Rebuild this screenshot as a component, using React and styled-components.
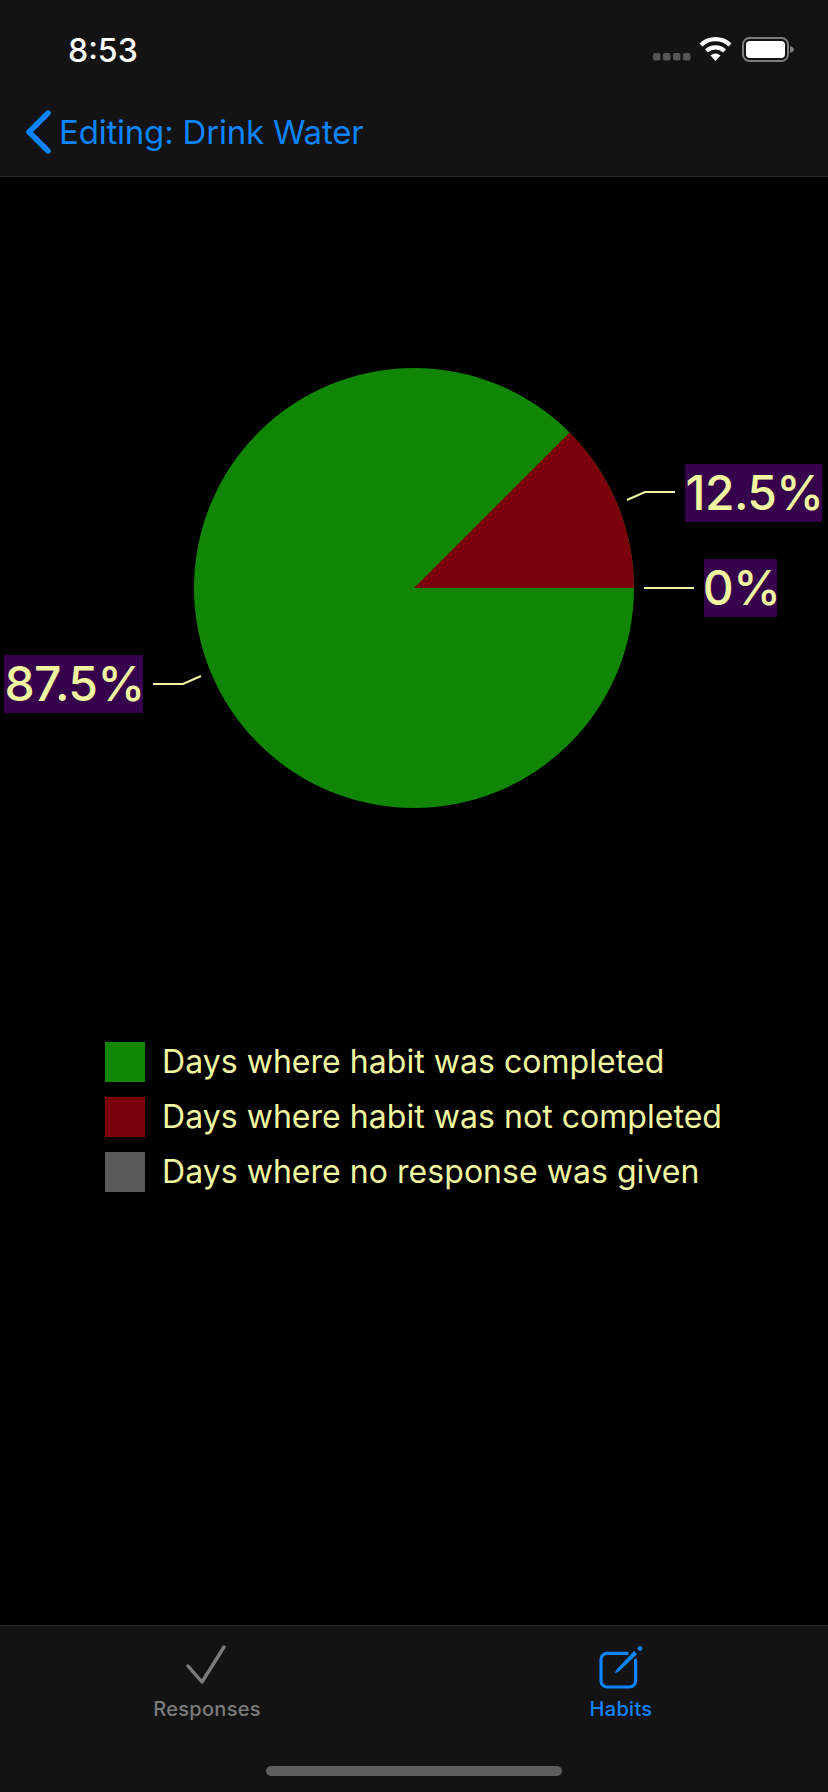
import React from "react";
import styled, { createGlobalStyle } from "styled-components";

const GlobalStyle = createGlobalStyle`
  html, body {
    margin: 0;
    padding: 0;
    background-color: #000;
  }
  body {
    font-family: Inter, "Noto Sans", sans-serif;
  }
`;

const Body = styled.div`
  display: flex;
  flex-direction: column;
  width: 828px;
  height: 1792px;
  overflow: hidden;
  background-color: #000;
`;
const Header = styled.header`
  height: 176px;
  flex-shrink: 0;
  background-color: #131313;
  border-bottom: 1px solid #2b2b2b;
`;
const StatusBar = styled.div`
  display: flex;
  align-items: center;
  justify-content: space-between;
  height: 88px;
  padding: 12px 33px 0 68px;
  box-sizing: border-box;
`;
const Time = styled.span`
  margin-top: 1px;
  color: #fff;
  font-size: 32px;
  font-weight: 500;
  line-height: 1;
`;
const NavBar = styled.div`
  display: flex;
  align-items: center;
  gap: 8px;
  height: 88px;
  padding-left: 25px;
`;
const NavTitle = styled.span`
  color: #0a84ff;
  font-size: 33px;
  font-weight: 400;
  letter-spacing: -0.2px;
`;
const Main = styled.main`
  flex: 1;
  display: flex;
  flex-direction: column;
`;
const Chart = styled.svg`
  display: block;
  width: 828px;
  height: 800px;
  flex-shrink: 0;
`;
const SliceLabel = styled.text`
  fill: #f0f7a0;
  font-family: Inter, "Noto Sans", sans-serif;
  font-size: 48px;
  font-weight: 500;
  letter-spacing: -0.6px;
`;
const Legend = styled.ul`
  display: flex;
  flex-direction: column;
  gap: 15px;
  margin: 65px 0 0;
  padding: 0 0 0 105px;
  list-style: none;
`;
const LegendRow = styled.li`
  display: flex;
  align-items: center;
  gap: 17px;
  height: 40px;
  color: #f0f7a0;
  font-size: 32px;
`;
const LegendText = styled.span`
  padding-bottom: 2px;
  letter-spacing: 0.04px;
`;
const Swatch = styled.span`
  width: 40px;
  height: 40px;
  background-color: ${(p) => p.$color};
`;
const TabBar = styled.footer`
  display: flex;
  flex-direction: column;
  align-items: center;
  height: 166px;
  flex-shrink: 0;
  background-color: #131313;
  border-top: 1px solid #2b2b2b;
`;
const Tabs = styled.nav`
  display: flex;
  width: 100%;
  padding-top: 18px;
`;
const Tab = styled.div`
  flex: 1;
  display: flex;
  flex-direction: column;
  align-items: center;
  gap: 5px;
  color: ${(p) => (p.$active ? "#0a84ff" : "#7b7b7b")};
  font-size: 20px;
  font-weight: 500;
  letter-spacing: 0.3px;
`;
const TabIcon = styled.svg`
  display: block;
  width: 48px;
  height: 48px;
`;
const HomeIndicator = styled.div`
  width: 296px;
  height: 10px;
  margin-top: 45px;
  border-radius: 5px;
  background-color: #5e5e5e;
`;
const StatusIcons = styled.svg`
  display: block;
  width: 142px;
  height: 30px;
`;

const LEGEND = [
  { color: "#118504", text: "Days where habit was completed" },
  { color: "#7a000c", text: "Days where habit was not completed" },
  { color: "#595959", text: "Days where no response was given" },
];

const LABELS = [
  { text: "12.5%", x: 685, y: 464, w: 137, line: "627,500 645,492 675,492" },
  { text: "0%", x: 704, y: 559, w: 73, line: "644,588 694,588" },
  { text: "87.5%", x: 4, y: 655, w: 139, line: "153,684 183,684 201,676" },
];

function Pie() {
  return (
    <Chart viewBox="0 177 828 800">
      <circle cx="414" cy="588" r="220" fill="#118504" />
      <path d="M414 588 L569.6 432.4 A220 220 0 0 1 634 588 Z" fill="#7a000c" />
      {LABELS.map((l) => (
        <g key={l.text}>
          <polyline points={l.line} fill="none" stroke="#f0f7a0" strokeWidth="2" />
          <rect x={l.x} y={l.y} width={l.w} height="58" fill="#37004d" />
          <SliceLabel x={l.x + l.w / 2 + 1} y={l.y + 46} textAnchor="middle">
            {l.text}
          </SliceLabel>
        </g>
      ))}
    </Chart>
  );
}

function App() {
  return (
    <Body>
      <GlobalStyle />
      <Header>
        <StatusBar>
          <Time>8:53</Time>
          <StatusIcons viewBox="0 0 142 30">
            <g fill="#555">
              <rect x="0" y="18" width="7.5" height="7.5" rx="2" />
              <rect x="10" y="18" width="7.5" height="7.5" rx="2" />
              <rect x="20" y="18" width="7.5" height="7.5" rx="2" />
              <rect x="30" y="18" width="7.5" height="7.5" rx="2" />
            </g>
            <g fill="none" stroke="#fff" strokeWidth="4.2">
              <path d="M48 10 A21 21 0 0 1 77 10" />
              <path d="M53.5 16 A13 13 0 0 1 71.5 16" />
            </g>
            <path d="M57.5 20.5 A8 8 0 0 1 67.5 20.5 L62.5 26 Z" fill="#fff" />
            <rect x="90" y="3" width="45" height="23" rx="6.5" fill="none" stroke="#7d7d7d" strokeWidth="2" />
            <rect x="93" y="6" width="39" height="17" rx="4" fill="#fff" />
            <path d="M137 11 C139.5 12 141 13 141 14.5 C141 16 139.5 17 137 18 Z" fill="#7d7d7d" />
          </StatusIcons>
        </StatusBar>
        <NavBar>
          <svg width="26" height="44" viewBox="0 0 26 44">
            <path d="M23 3 L4 22 L23 41" fill="none" stroke="#0a84ff" strokeWidth="5.5" strokeLinecap="round" strokeLinejoin="round" />
          </svg>
          <NavTitle>Editing: Drink Water</NavTitle>
        </NavBar>
      </Header>
      <Main>
        <Pie />
        <Legend>
          {LEGEND.map((item) => (
            <LegendRow key={item.text}>
              <Swatch $color={item.color} />
              <LegendText>{item.text}</LegendText>
            </LegendRow>
          ))}
        </Legend>
      </Main>
      <TabBar>
        <Tabs>
          <Tab>
            <TabIcon viewBox="0 0 48 48">
              <path d="M5 22 L19 38 L41 3" fill="none" stroke="#7b7b7b" strokeWidth="3.4" strokeLinecap="round" strokeLinejoin="round" />
            </TabIcon>
            Responses
          </Tab>
          <Tab $active>
            <TabIcon viewBox="0 0 48 48">
              <path d="M30 9.4 H10 A6 6 0 0 0 4 15.4 V37 A6 6 0 0 0 10 43 H32.6 A6 6 0 0 0 38.6 37 V16" fill="none" stroke="#0a84ff" strokeWidth="3.2" strokeLinecap="round" />
              <path d="M17.5 29.5 L20 25 L37 7 L40.2 10 L22.5 27 Z" fill="#0a84ff" />
              <circle cx="43" cy="4.5" r="2.4" fill="#0a84ff" />
            </TabIcon>
            Habits
          </Tab>
        </Tabs>
        <HomeIndicator />
      </TabBar>
    </Body>
  );
}

export default App;
